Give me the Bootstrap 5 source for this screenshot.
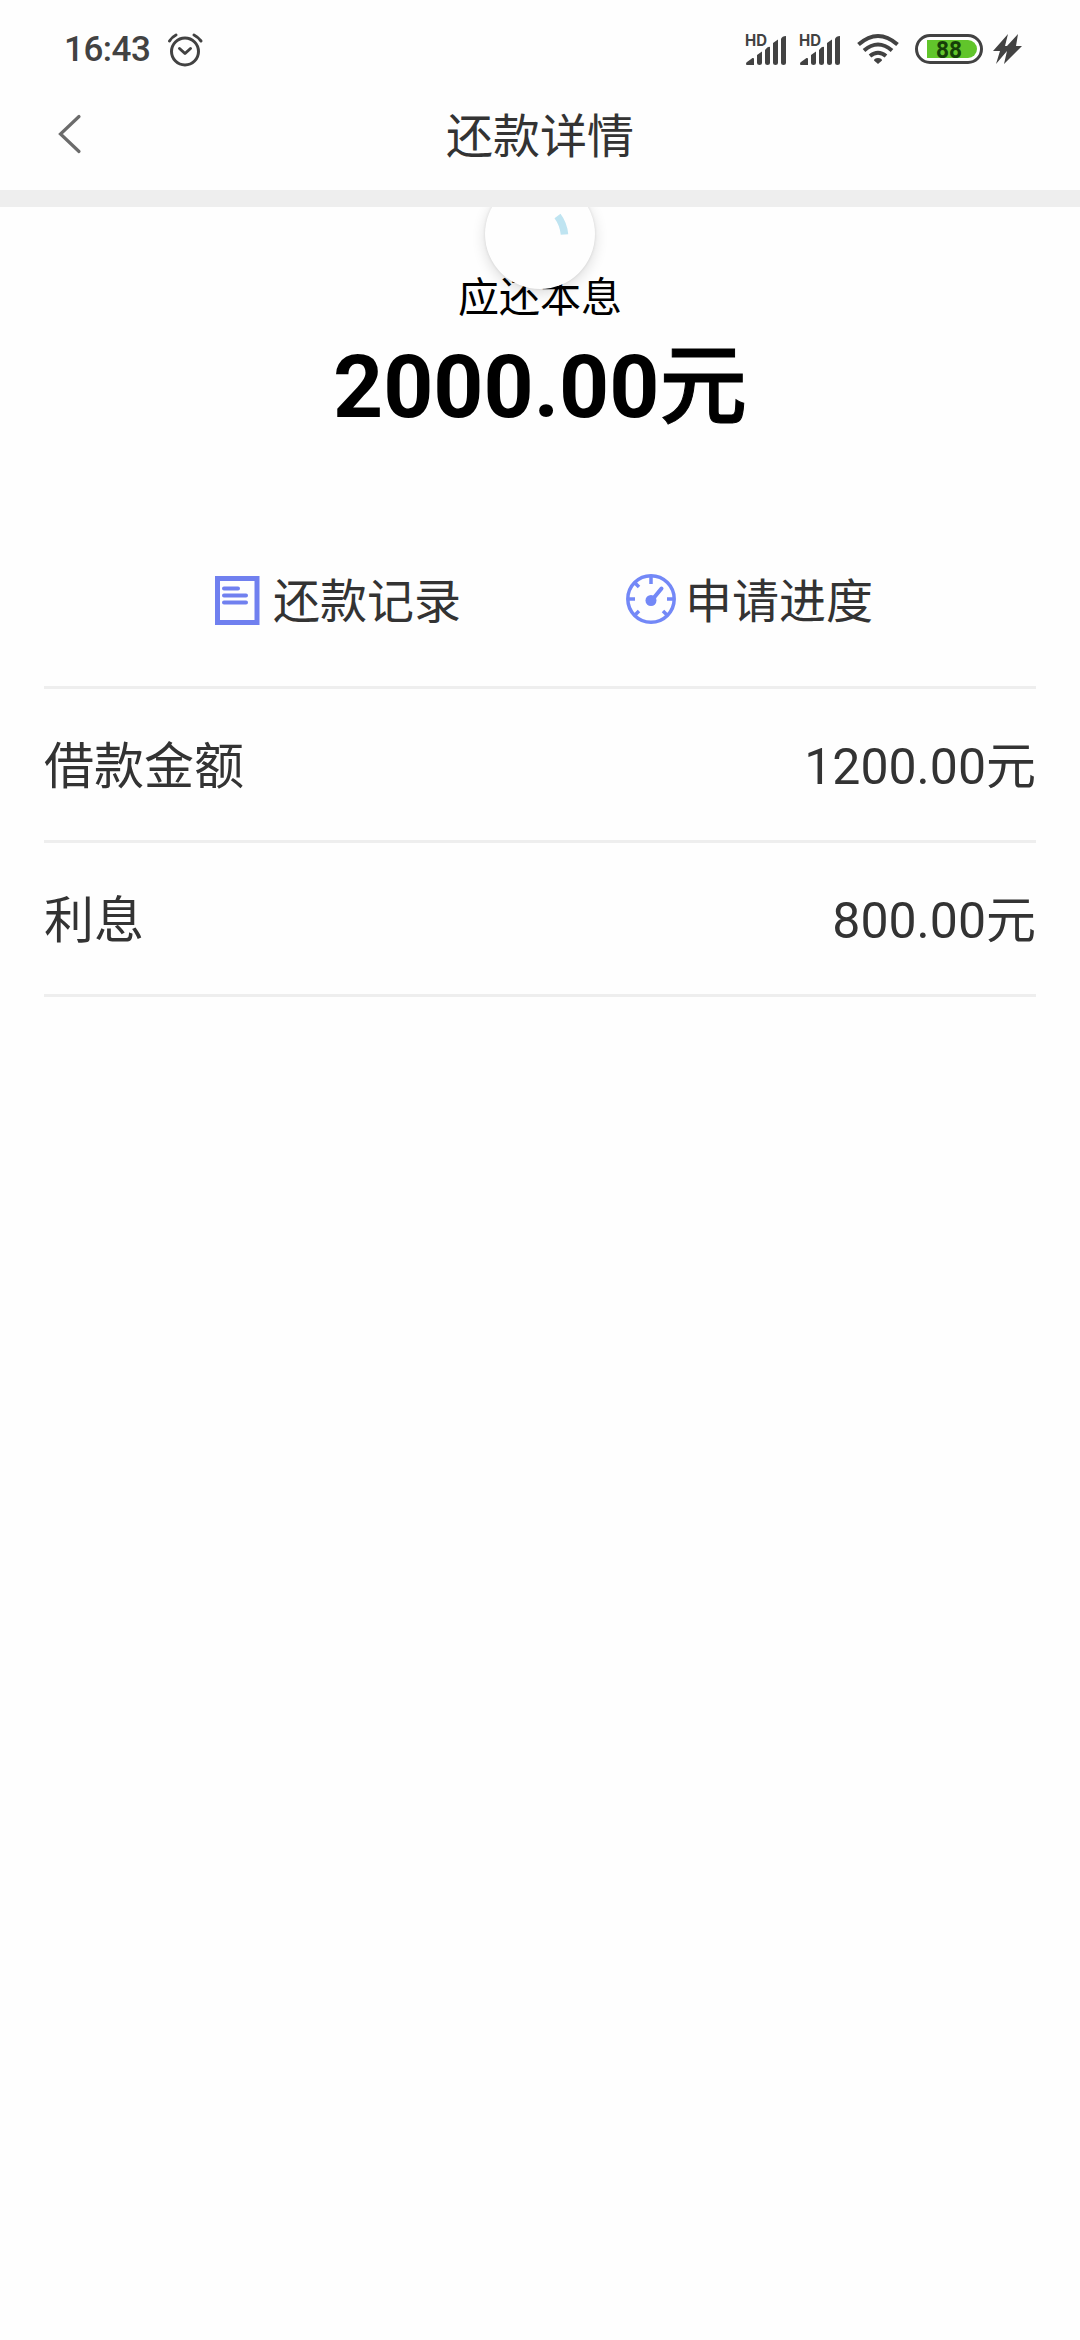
<!DOCTYPE html>
<html lang="zh-CN">
<head>
<meta charset="utf-8">
<meta name="viewport" content="width=device-width, initial-scale=1">
<title>还款详情</title>
<link href="https://cdn.jsdelivr.net/npm/bootstrap@5.3.0/dist/css/bootstrap.min.css" rel="stylesheet">
<style>
body{font-family:Roboto,"Noto Sans CJK SC",sans-serif;color:#333;background:#fefefe;min-height:2340px}
svg{display:block;flex:none;overflow:visible}
.status-bar{height:100px;padding:0 58px 0 64px;color:#424242}
.clock{font-size:35px;font-weight:500;line-height:100px;letter-spacing:-.5px;width:102px}
.status-icons{gap:12px;padding-bottom:2px}
.title-bar{height:90px;border:0}
.title-bar h1{font-size:47px;line-height:74px;font-weight:400;padding-bottom:16px}
.back-btn{left:56px;top:12px;color:#6b6b6b}
.band{height:17px;background:#eee}
.summary{height:479px;overflow:hidden;color:#000}
.sum-label{font-size:41px;line-height:60px;padding-top:61px}
.sum-amount{font-size:87.500px;font-weight:700;line-height:118px}
.sum-unit{font-weight:500;-webkit-text-stroke:1px #000}
.loader{width:110px;height:110px;left:485px;top:-28px;background:#fefefe;box-shadow:0 4px 14px rgba(0,0,0,.14),0 0 3px rgba(0,0,0,.1)}
.actions{padding:126px 0 0 212px;color:#333;font-size:47px;line-height:60px}
.action-link{width:412px}
.bolt{margin-left:-2px}
.detail-list{margin:0 44px;border-top:3px solid #eee}
.detail-row{height:154px;border-bottom:3px solid #eee;padding-top:5px;font-size:50px;line-height:70px}
</style>
</head>
<body>
<header>
  <div class="status-bar d-flex align-items-center justify-content-between">
    <div class="d-flex align-items-center">
      <span class="clock">16:43</span>
      <svg width="37" height="36" viewBox="0 0 37 36" fill="none" stroke="currentColor" stroke-width="3" stroke-linecap="round" stroke-linejoin="round"><circle cx="19" cy="19.500" r="13.500"/><path d="M13.500 16.500 19 21.500l5.500-5M3.500 9q2.500-4 6.500-6M28 3q4 2 7 6"/></svg>
    </div>
    <div class="status-icons d-flex align-items-center">
      <svg width="42" height="38" viewBox="0 -2 42 38" fill="currentColor"><text x="0" y="14" font-family="Inter,sans-serif" font-size="15.500" font-weight="700" textLength="22" lengthAdjust="spacingAndGlyphs">HD</text><path d="M1 32q0-1.500 1-2l5.500-4q1.500-.5 1.500 1v6H2q-1 0-1-1M12 23l5-3.500V31q0 2-2.500 2T12 31zM20 18q3-4 5-3v16q0 2-2.500 2T20 31zM28 11l5-3.500V31q0 2-2.500 2T28 31zM36 7q1-3 5-3v27q0 2-2.500 2T36 31z"/></svg>
      <svg width="42" height="38" viewBox="0 -2 42 38" fill="currentColor"><text x="0" y="14" font-family="Inter,sans-serif" font-size="15.500" font-weight="700" textLength="22" lengthAdjust="spacingAndGlyphs">HD</text><path d="M1 32q0-1.500 1-2l5.500-4q1.500-.5 1.500 1v6H2q-1 0-1-1M12 23l5-3.500V31q0 2-2.500 2T12 31zM20 18q3-4 5-3v16q0 2-2.500 2T20 31zM28 11l5-3.500V31q0 2-2.500 2T28 31zM36 7q1-3 5-3v27q0 2-2.500 2T36 31z"/></svg>
      <svg class="ms-1" width="42" height="32" viewBox="0 0 42 32" fill="none" stroke="currentColor" stroke-width="4"><path d="M1.500 11.500Q21-5.500 40.500 11.500M7 17.500q14-12 28 0M13 23q8-6.500 16 0"/><path d="M21 31l-4-3.500q0-2.500 4-2.500t4 2.500z" fill="currentColor" stroke="none"/></svg>
      <svg class="ms-1" width="68" height="30" viewBox="0 0 68 30"><rect x="1.500" y="1.500" width="65" height="27" rx="13.500" fill="#fff" stroke="currentColor" stroke-width="3"/><path d="M12 6h41a9 9 0 0 1 0 18H12z" fill="#61c52b"/><text x="34" y="23.500" text-anchor="middle" font-family="Roboto,sans-serif" font-size="24" font-weight="700" textLength="26" lengthAdjust="spacingAndGlyphs" fill="#154008">88</text></svg>
      <svg class="bolt" width="29" height="30" viewBox="0 0 29 30" fill="currentColor"><path d="M15 0 0 17h7L3 30 14 17h0l-3 13L29 12h-6L25 0 14 12h-2z"/></svg>
    </div>
  </div>
  <nav class="title-bar position-relative text-center">
    <a class="back-btn position-absolute" href="#" aria-label="返回"><svg width="28" height="44" viewBox="0 0 28 44" fill="none" stroke="currentColor" stroke-width="3.200" stroke-linecap="round"><path d="M23 4.500 4.500 22 23 39.500"/></svg></a>
    <h1 class="m-0">还款详情</h1>
  </nav>
  <div class="band"></div>
</header>
<main>
  <section class="summary position-relative">
    <div class="sum-label text-center">应还本息</div>
    <div class="sum-amount text-center">2000.00<span class="sum-unit">元</span></div>
    <div class="loader position-absolute rounded-circle"><svg width="110" height="110" viewBox="0 0 110 110" fill="none"><path d="M72.500 37Q78.500 45 79.500 55.500" stroke="#bfe4f1" stroke-width="7.500"/></svg></div>
    <div class="actions d-flex">
      <div class="action-link d-flex align-items-center">
        <svg width="61" height="56" viewBox="0 0 61 56" fill="none" stroke="#7080ef"><path d="M5.500 4.500h39.500v44H5.500z" stroke-width="5"/><path d="M12 14.500h14M12 21.500h22M12 28.500h22" stroke-width="4" stroke-linecap="round"/></svg>
        <span>还款记录</span>
      </div>
      <div class="d-flex align-items-center">
        <svg width="61" height="56" viewBox="0 0 61 56" fill="none" stroke="#7388f7" stroke-width="3.500"><circle cx="27" cy="25" r="23.200"/><path d="M27 2v8M4 25h7M43 25h7M11 9l4 4M11 41l4-4M43 41l-4-4"/><path d="M28 26 37.500 14.500" stroke-width="4" stroke-linecap="round"/><circle cx="27" cy="26.500" r="5.500" fill="#7388f7" stroke="none"/></svg>
        <span>申请进度</span>
      </div>
    </div>
  </section>
  <section class="detail-list">
    <div class="detail-row d-flex align-items-center justify-content-between"><span>借款金额</span><span>1200.00元</span></div>
    <div class="detail-row d-flex align-items-center justify-content-between"><span>利息</span><span>800.00元</span></div>
  </section>
</main>
<script src="https://cdn.jsdelivr.net/npm/bootstrap@5.3.0/dist/js/bootstrap.bundle.min.js"></script>
</body>
</html>
